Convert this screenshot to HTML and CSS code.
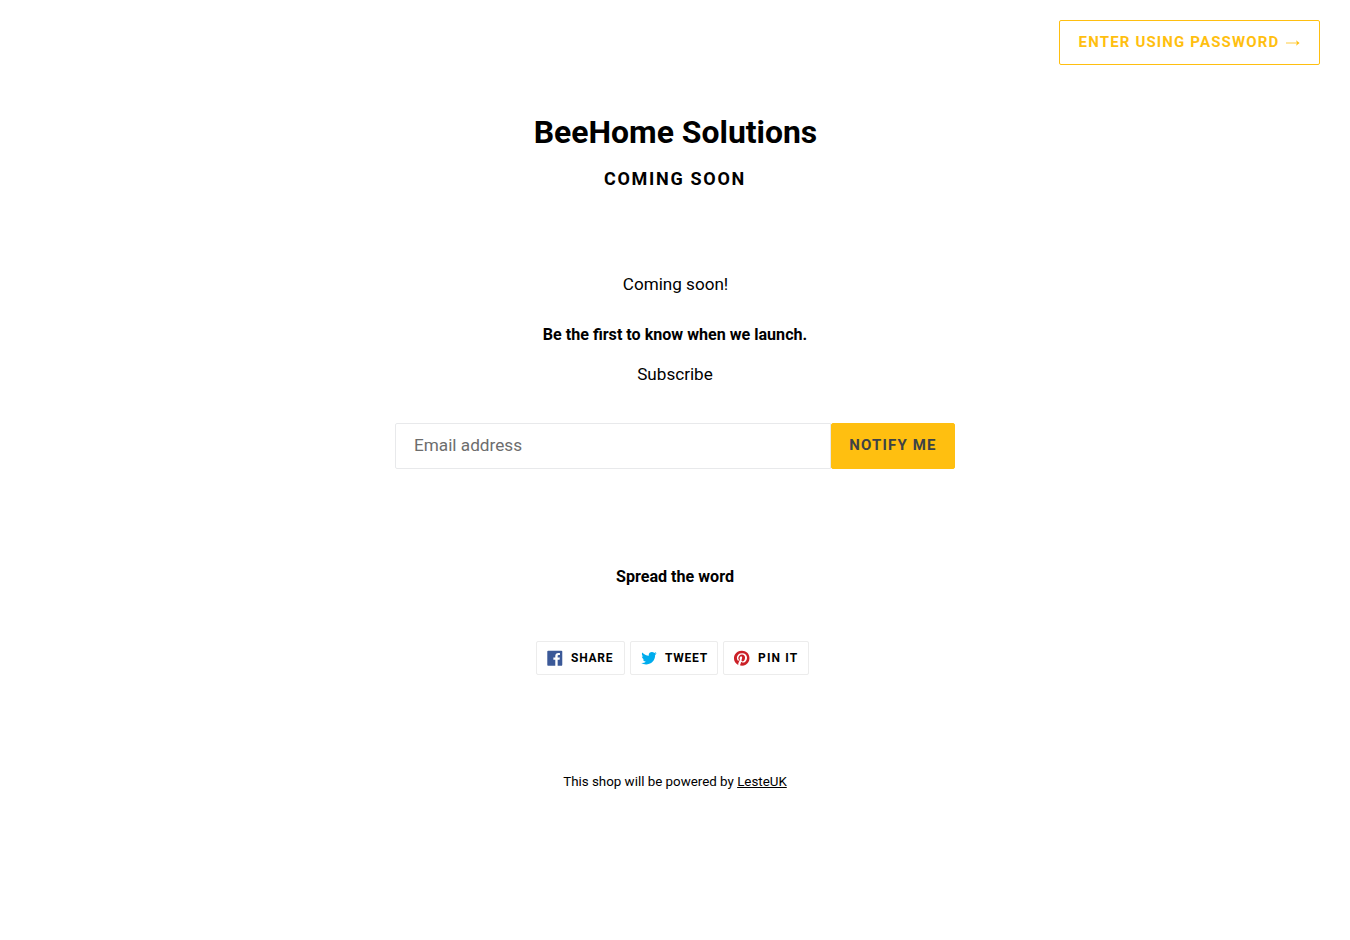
FILE: index.html
```html
<!DOCTYPE html>
<html lang="en">
<head>
    <meta charset="UTF-8">
    <meta name="viewport" content="width=device-width, initial-scale=1.0">
    <title>BeeHome Solutions</title>
    <link rel="stylesheet" href="styles.css">
</head>
<body>
    <div class="password-login">
        <a href="#" class="btn btn-outline">Enter using password
            <svg class="icon-arrow" viewBox="0 0 14 8"><path d="M0 4h12"/><path class="head" d="M10 1.2L13.6 4 10 6.8l1-2.8z"/></svg>
        </a>
    </div>

    <header class="password-header">
        <h1>BeeHome Solutions</h1>
        <h2>Coming soon</h2>
    </header>

    <main class="password-main">
        <p class="message">Coming soon!</p>
        <h3>Be the first to know when we launch.</h3>
        <p class="subscribe">Subscribe</p>
        <form class="newsletter">
            <input type="email" placeholder="Email address" aria-label="Email address">
            <button type="button" class="btn btn-notify">Notify me</button>
        </form>

        <h3 class="spread">Spread the word</h3>
        <div class="social-sharing">
            <a href="#" class="share share-facebook">
                <svg viewBox="0 0 20 20"><path fill="#3b5998" d="M18.05.811q.439 0 .744.305t.305.744v16.637q0 .439-.305.744t-.744.305h-4.732v-7.221h2.415l.342-2.854h-2.757v-1.83q0-.659.293-1t1.073-.342h1.488V3.762q-.976-.098-2.171-.098-1.634 0-2.635.964t-1 2.72V9.47H7.951v2.854h2.415v7.221H1.413q-.439 0-.744-.305t-.305-.744V1.859q0-.439.305-.744T1.413.81H18.05z"/></svg>
                <span>Share</span>
            </a>
            <a href="#" class="share share-twitter">
                <svg viewBox="0 0 20 20"><path fill="#00aced" d="M19.551 4.208q-.815 1.202-1.956 2.038 0 .082.02.255t.02.255q0 1.589-.469 3.179t-1.426 3.036-2.272 2.567-3.158 1.793-3.963.672q-3.301 0-6.031-1.773.571.041.937.041 2.751 0 4.911-1.671-1.284-.02-2.292-.784T2.456 11.85q.346.082.754.082.55 0 1.039-.163-1.365-.285-2.262-1.365T1.09 7.918v-.041q.774.408 1.773.448-.795-.53-1.263-1.396t-.469-1.864q0-1.019.509-1.997 1.487 1.854 3.596 2.924T9.81 7.184q-.143-.509-.143-.897 0-1.63 1.161-2.781t2.832-1.151q.815 0 1.569.326t1.284.917q1.345-.265 2.506-.958-.428 1.386-1.732 2.18 1.243-.163 2.262-.611z"/></svg>
                <span>Tweet</span>
            </a>
            <a href="#" class="share share-pinterest">
                <svg viewBox="0 0 20 20"><path fill="#cb2027" d="M9.958.811q1.903 0 3.635.744t2.988 2 2 2.988.744 3.635q0 2.537-1.256 4.696t-3.415 3.415-4.696 1.256q-1.39 0-2.659-.366.707-1.147.951-2.025l.659-2.561q.244.463.903.817t1.39.354q1.464 0 2.622-.842t1.793-2.305.634-3.293q0-2.171-1.671-3.769t-4.257-1.598q-1.586 0-2.903.537T5.298 5.897 4.066 7.775t-.427 2.037q0 1.268.476 2.22t1.427 1.342q.146.073.256.012t.146-.207q.098-.341.195-.732.073-.195-.122-.463-.634-.707-.634-1.756 0-1.829 1.268-3.146t3.317-1.317q1.805 0 2.83.988t1.024 2.573q0 2.074-.829 3.524t-2.122 1.45q-.756 0-1.207-.537t-.28-1.268q.098-.415.305-1.086t.341-1.195.134-.866q0-.61-.329-1t-.915-.39q-.756 0-1.268.683t-.512 1.707q0 .854.293 1.439L5.47 16.52q-.195.878-.122 2.146-2.463-1.073-3.939-3.354T-.067 10.19q0-2.537 1.256-4.696t3.415-3.415T9.958.811z"/></svg>
                <span>Pin it</span>
            </a>
        </div>
    </main>

    <footer>This shop will be powered by <a href="#">LesteUK</a></footer>
</body>
</html>
```
FILE: styles.css
```css
* { box-sizing: border-box; }
body {
    margin: 0;
    font-family: Roboto, sans-serif;
    font-size: 17.1px;
    line-height: 25px;
    color: #000;
    background-color: #fff;
    text-align: center;
}
h1, h2, h3, p { margin: 0; }
a { color: inherit; }
.password-login {
    display: flex;
    justify-content: flex-end;
    padding: 20px 30px 0;
}
.btn {
    display: flex;
    align-items: center;
    justify-content: center;
    font-family: inherit;
    font-size: 15px;
    font-weight: 700;
    letter-spacing: 1.15px;
    text-transform: uppercase;
    text-decoration: none;
    white-space: nowrap;
    border: 1px solid #ffbf10;
    border-radius: 2px;
    padding: 0;
}
.btn-outline {
    width: 261px;
    height: 45px;
    color: #ffbf10;
}
.icon-arrow {
    width: 14px;
    height: 8px;
    margin-left: 7px;
    fill: none;
    stroke: #ffbf10;
    stroke-width: 0.8;
}
.icon-arrow .head {
    fill: #ffbf10;
    stroke: none;
}
.password-header h1 {
    margin-top: 47px;
    padding-left: 1px;
    font-size: 31.9px;
    line-height: 40px;
}
.password-header h2 {
    margin-top: 14px;
    font-size: 18px;
    line-height: 26px;
    letter-spacing: 1.7px;
    text-transform: uppercase;
}
.password-main {
    width: 560px;
    margin: 80px auto 0;
}
h3 {
    font-size: 16.1px;
    line-height: 20px;
}
.message {
    margin-bottom: 28px;
    padding-left: 1px;
}
.subscribe { margin-top: 17px; }
.newsletter {
    display: flex;
    height: 46px;
    margin-top: 36px;
}
.newsletter input {
    flex: 1;
    min-width: 0;
    padding: 0 18px 2px;
    font-family: inherit;
    font-size: 17.2px;
    border: 1px solid #e8e9eb;
    border-radius: 2px 0 0 2px;
}
.newsletter input::placeholder { color: #6d6d6d; }
.btn-notify {
    width: 124px;
    padding-bottom: 2px;
    color: #3d4246;
    background-color: #ffbf10;
    border-radius: 2px;
}
.spread { margin-top: 98px; }
.social-sharing {
    display: flex;
    justify-content: center;
    gap: 5px;
    margin: 54px 5px 0 0;
}
.share {
    display: flex;
    align-items: center;
    height: 34px;
    padding-left: 10px;
    font-size: 12px;
    font-weight: 700;
    letter-spacing: 0.75px;
    text-transform: uppercase;
    text-decoration: none;
    white-space: nowrap;
    border: 1px solid #ececec;
    border-radius: 2px;
}
.share svg {
    width: 16px;
    height: 16px;
    margin-right: 8px;
}
.share-facebook { width: 89px; }
.share-twitter { width: 88px; }
.share-pinterest {
    width: 86px;
    letter-spacing: 1.15px;
}
footer {
    margin-top: 94px;
    font-size: 13.35px;
}
```
